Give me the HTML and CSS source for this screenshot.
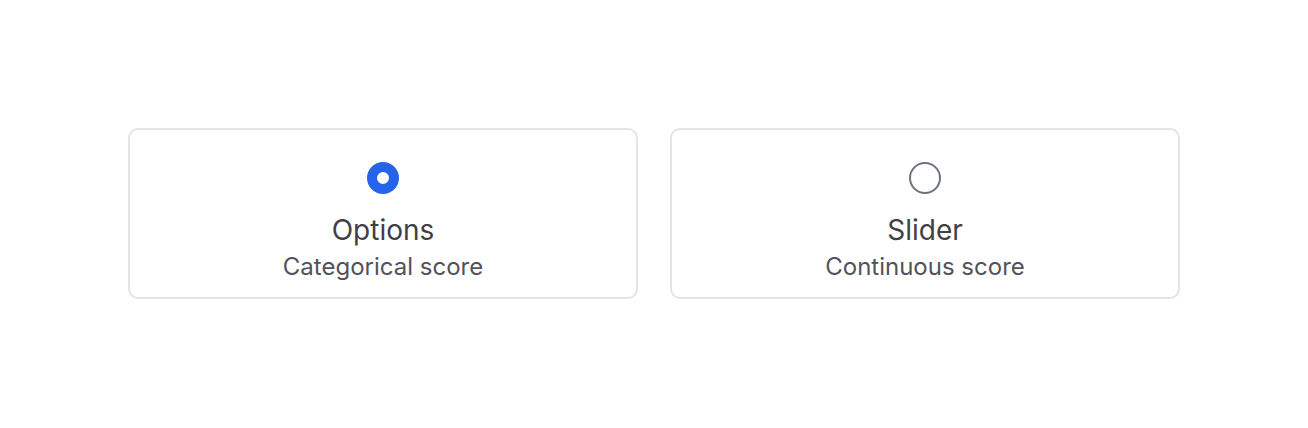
FILE: index.html
```html
<!DOCTYPE html>
<html lang="en">
<head>
  <meta charset="UTF-8">
  <meta name="viewport" content="width=device-width, initial-scale=1.0">
  <title>Score type</title>
  <link rel="stylesheet" href="styles.css">
</head>
<body>
  <div class="choices">
    <label class="choice">
      <input type="radio" name="score" class="radio" checked>
      <span class="title">Options</span>
      <span class="desc">Categorical score</span>
    </label>
    <label class="choice">
      <input type="radio" name="score" class="radio">
      <span class="title">Slider</span>
      <span class="desc">Continuous score</span>
    </label>
  </div>
</body>
</html>
```

FILE: styles.css
```css
body {
  margin: 0;
  display: flex;
  justify-content: center;
  background: #fff;
  font-family: Inter, "Noto Sans", sans-serif;
}
.choices {
  width: 1052px;
  display: grid;
  grid-template-columns: 1fr 1fr;
  gap: 32px;
  margin-top: 128px;
}
.choice {
  display: flex;
  flex-direction: column;
  align-items: center;
  border: 2px solid #e4e4e7;
  border-radius: 10px;
  padding: 32px 16px 15px;
  cursor: pointer;
}
.radio {
  appearance: none;
  width: 32px;
  height: 32px;
  margin: 0 0 19px;
  border: 2px solid #6b7280;
  border-radius: 50%;
  background: #fff;
}
.radio:checked {
  border: 10px solid #2563eb;
}
.title {
  font-size: 28px;
  line-height: 34px;
  color: #3f3f46;
}
.desc {
  font-size: 24px;
  line-height: 30px;
  margin-top: 5px;
  color: #52525b;
}
```
